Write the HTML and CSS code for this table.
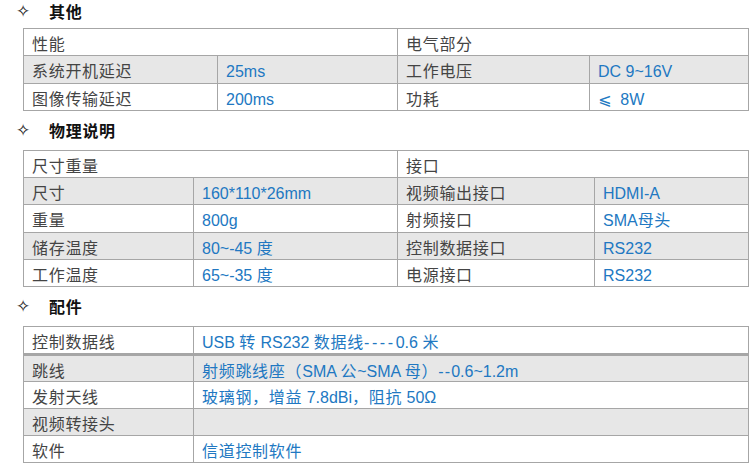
FILE: index.html
```html
<!DOCTYPE html>
<html lang="zh-CN">
<head>
<meta charset="utf-8">
<title>参数</title>
<link rel="stylesheet" href="styles.css">
</head>
<body>
<div class="page">
  <div class="heading first"><span class="star">✧</span><span class="htext">其他</span></div>
  <div class="grid t1">
    <div class="c span2">性能</div>
    <div class="c span2">电气部分</div>
    <div class="c g">系统开机延迟</div>
    <div class="c g v">25ms</div>
    <div class="c g">工作电压</div>
    <div class="c g v">DC 9~16V</div>
    <div class="c">图像传输延迟</div>
    <div class="c v">200ms</div>
    <div class="c">功耗</div>
    <div class="c v"><span class="sym">⩽</span>&nbsp;&nbsp;8W</div>
  </div>

  <div class="heading"><span class="star">✧</span><span class="htext">物理说明</span></div>
  <div class="grid t2">
    <div class="c span2">尺寸重量</div>
    <div class="c span2">接口</div>
    <div class="c g">尺寸</div>
    <div class="c g v">160*110*26mm</div>
    <div class="c g">视频输出接口</div>
    <div class="c g v">HDMI-A</div>
    <div class="c">重量</div>
    <div class="c v">800g</div>
    <div class="c">射频接口</div>
    <div class="c v">SMA<span class="zh">母头</span></div>
    <div class="c g">储存温度</div>
    <div class="c g v">80~-45 <span class="zh">度</span></div>
    <div class="c g">控制数据接口</div>
    <div class="c g v">RS232</div>
    <div class="c">工作温度</div>
    <div class="c v">65~-35 <span class="zh">度</span></div>
    <div class="c">电源接口</div>
    <div class="c v">RS232</div>
  </div>

  <div class="heading"><span class="star">✧</span><span class="htext">配件</span></div>
  <div class="grid t3">
    <div class="c">控制数据线</div>
    <div class="c v">USB <span class="zh">转</span> RS232 <span class="zh">数据线</span><span class="dash">----</span>0.6 <span class="zh">米</span></div>
    <div class="c g thick">跳线</div>
    <div class="c g v thick"><span class="zh">射频跳线座（</span>SMA <span class="zh">公</span>~SMA <span class="zh">母）</span><span class="dash2">--</span>0.6~1.2m</div>
    <div class="c">发射天线</div>
    <div class="c v"><span class="zh">玻璃钢，增益</span> 7.8dBi<span class="zh">，阻抗</span> 50Ω</div>
    <div class="c g">视频转接头</div>
    <div class="c g v"></div>
    <div class="c">软件</div>
    <div class="c v"><span class="zh">信道控制软件</span></div>
  </div>
</div>
</body>
</html>
```

FILE: styles.css
```css
html, body {
  margin: 0;
  padding: 0;
  background: #ffffff;
}

.page {
  width: 753px;
  font-family: "Liberation Sans", "Noto Sans CJK SC", sans-serif;
  font-size: 16px;
  color: #444444;
}

.heading {
  height: 39px;
  padding-top: 9px;
  box-sizing: border-box;
  display: flex;
  align-items: flex-start;
  line-height: 20px;
}

.heading > span {
  height: 20px;
  display: flex;
  align-items: center;
}

.heading.first {
  height: 28px;
  padding-top: 1px;
}

.star {
  width: 33px;
  margin-left: 16px;
  font-family: "DejaVu Sans", sans-serif;
  font-size: 17px;
  color: #111111;
}

.htext {
  font-family: "Noto Sans CJK SC", sans-serif;
  font-weight: 700;
  font-size: 16px;
  letter-spacing: 0.7px;
  color: #111111;
}

.grid {
  display: grid;
  width: 726px;
  box-sizing: border-box;
  margin-left: 23px;
  padding: 1px;
  gap: 1px;
  background: #a6a6a6;
}

.t1 {
  grid-template-columns: 193px 179px 191px 158px;
  grid-template-rows: 26px 27px 26px;
}

.t2 {
  grid-template-columns: 169px 203px 196px 153px;
  grid-template-rows: 26px 26px 27px 26px 26px;
}

.t3 {
  grid-template-columns: 169px 554px;
  grid-template-rows: 26px 27px 26px 26px 26px;
}

.c {
  background: #ffffff;
  box-sizing: border-box;
  padding: 5px 0 0 8px;
  line-height: 21px;
  white-space: nowrap;
  overflow: hidden;
  letter-spacing: 0.7px;
}

.c.g {
  background: #e7e7e7;
}

.c.v {
  color: #2178c2;
  letter-spacing: 0;
}

.c.v .zh {
  letter-spacing: 0.7px;
}

.dash {
  letter-spacing: 2.6px;
}

.dash2 {
  letter-spacing: 1.2px;
}

.sym {
  font-family: "DejaVu Sans", sans-serif;
}

.c.span2 {
  grid-column: span 2;
}

.c.thick {
  border-top: 2px solid #a6a6a6;
}
```
